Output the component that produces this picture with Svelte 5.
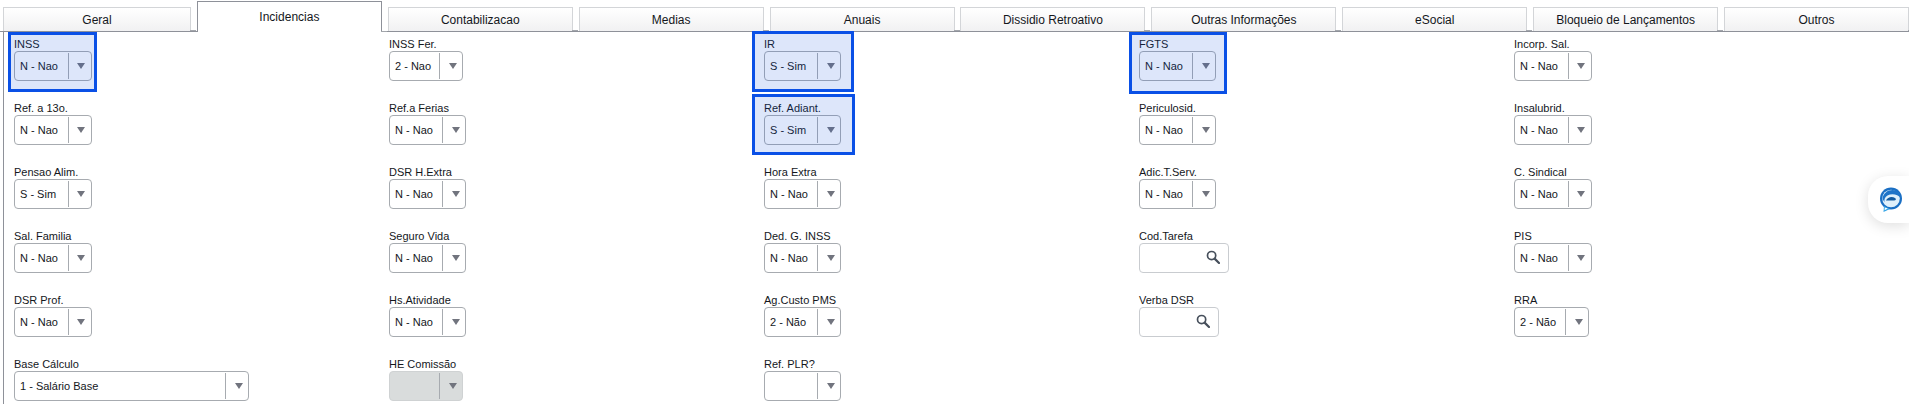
<script>
  const tabs = ['Geral','Incidencias','Contabilizacao','Medias','Anuais','Dissidio Retroativo','Outras Informações','eSocial','Bloqueio de Lançamentos','Outros'];
  const fields = [
    {l:'INSS',v:'N - Nao',w:'w78',hl:'h1'},{l:'INSS Fer.',v:'2 - Nao',w:'w74'},{l:'IR',v:'S - Sim',w:'w77',hl:'h2'},{l:'FGTS',v:'N - Nao',w:'w77',hl:'h3'},{l:'Incorp. Sal.',v:'N - Nao',w:'w78'},
    {l:'Ref. a 13o.',v:'N - Nao',w:'w78'},{l:'Ref.a Ferias',v:'N - Nao',w:'w77'},{l:'Ref. Adiant.',v:'S - Sim',w:'w77',hl:'h4'},{l:'Periculosid.',v:'N - Nao',w:'w77'},{l:'Insalubrid.',v:'N - Nao',w:'w78'},
    {l:'Pensao Alim.',v:'S - Sim',w:'w78'},{l:'DSR H.Extra',v:'N - Nao',w:'w77'},{l:'Hora Extra',v:'N - Nao',w:'w77'},{l:'Adic.T.Serv.',v:'N - Nao',w:'w77'},{l:'C. Sindical',v:'N - Nao',w:'w78'},
    {l:'Sal. Familia',v:'N - Nao',w:'w78'},{l:'Seguro Vida',v:'N - Nao',w:'w77'},{l:'Ded. G. INSS',v:'N - Nao',w:'w77'},{l:'Cod.Tarefa',t:'search',w:'w90'},{l:'PIS',v:'N - Nao',w:'w78'},
    {l:'DSR Prof.',v:'N - Nao',w:'w78'},{l:'Hs.Atividade',v:'N - Nao',w:'w77'},{l:'Ag.Custo PMS',v:'2 - Não',w:'w77'},{l:'Verba DSR',t:'search',w:'w80'},{l:'RRA',v:'2 - Não',w:'w75'},
    {l:'Base Cálculo',v:'1 - Salário Base',w:'w235'},{l:'HE Comissão',v:'',w:'w74',dis:true},{l:'Ref. PLR?',v:'',w:'w77'}
  ];
</script>

<div class="page">
  <nav class="tabs">
    {#each tabs as t, i}
      <div class="tab" class:active={i === 1} class:first={i === 0}>{t}</div>
    {/each}
  </nav>
  <main class="form">
    {#each fields as f}
      <div class="field">
        {#if f.hl}<div class="hl {f.hl}"></div>{/if}
        <div class="label">{f.l}</div>
        {#if f.t === 'search'}
          <div class="control lookup {f.w}">
            <span class="value"></span>
            <svg class="search" viewBox="0 0 14 14" width="14" height="14" aria-hidden="true">
              <circle cx="5.6" cy="5.6" r="4.1" fill="none" stroke="#47505c" stroke-width="1.7"/>
              <path d="M8.6 8.6 L13 13" stroke="#47505c" stroke-width="2.2" stroke-linecap="round"/>
            </svg>
          </div>
        {:else}
          <div class="control {f.w}" class:disabled={f.dis}>
            <span class="value">{f.v}</span>
            <span class="btn"><span class="caret"></span></span>
          </div>
        {/if}
      </div>
    {/each}
  </main>
  <aside class="chat">
    <svg viewBox="0 0 26 28" width="26" height="28" aria-hidden="true">
      <circle cx="13" cy="12.5" r="11" fill="#1a6fc4"/>
      <circle cx="13" cy="12.5" r="8.8" fill="#dff0fb"/>
      <path d="M4.5 13 C5 6 12 2.5 18 4.5 C21.5 6 23 9 23 12 C20 8.5 14 7 9.5 9.5 C7 11 6 13 6.5 16 Z" fill="#1f74c8"/>
      <path d="M8 14.5 C9.5 11 14 10 17 12 C18.5 13 18 14.5 16 14.5 Z" fill="#135a9f"/>
      <path d="M6 20 L5.5 26 L12 23 Z" fill="#35a5e6"/>
      <path d="M6.8 21.5 L6.6 24.2 L9.8 22.6 Z" fill="#fff"/>
    </svg>
  </aside>
</div>

<style>
  :global(body) { margin: 0; background: #fff; }
  .page {
    position: relative;
    width: 1909px;
    height: 404px;
    overflow: hidden;
    font-family: "Liberation Sans", Arial, sans-serif;
    font-size: 11px;
    color: #14171c;
  }
  .tabs {
    display: flex;
    align-items: flex-end;
    gap: 5.9px;
    height: 32px;
    padding-left: 3px;
    box-sizing: border-box;
    border-bottom: 1px solid #8e9199;
    font-size: 12px;
  }
  .tab {
    position: relative;
    flex: 0 0 185px;
    height: 24px;
    box-sizing: border-box;
    border: 1px solid #d3d5d8;
    border-bottom: 0;
    background: linear-gradient(#ffffff, #f1f1f2);
    display: flex;
    align-items: center;
    justify-content: center;
  }
  .tab::after {
    content: "";
    position: absolute;
    left: 100%;
    bottom: 0;
    width: 6px;
    height: 1px;
    background: #a3a6ac;
  }
  .tab.first { flex-basis: 188px; }
  .tab.active {
    height: 31px;
    background: #fff;
    border: 1px solid #8e9199;
    border-bottom: 0;
    margin-bottom: -1px;
  }
  .form {
    display: grid;
    grid-template-columns: repeat(5, 375px);
    grid-auto-rows: 64px;
    height: 372px;
    box-sizing: border-box;
    padding: 6px 0 0 10px;
    margin-left: 3px;
    border-left: 1px solid #8e9199;
    width: 1906px;
  }
  .field { position: relative; }
  .label { height: 13px; line-height: 12px; }
  .control {
    display: flex;
    align-items: stretch;
    position: relative;
    box-sizing: border-box;
    height: 30px;
    border: 1px solid #a7abb0;
    border-radius: 4px;
    background: #fff;
  }
  .lookup { border-color: #c9ccd0; }
  .w74 { width: 74px; }
  .w75 { width: 75px; }
  .w77 { width: 77px; }
  .w78 { width: 77.5px; }
  .w80 { width: 80px; }
  .w90 { width: 90px; }
  .w235 { width: 235px; }
  .disabled { background: #d9dcdc; border-color: #cfd2d3; }
  .value { flex: 1; padding-left: 5px; line-height: 28px; white-space: pre; }
  .btn {
    flex: 0 0 22px;
    margin: 1px 0;
    border-left: 1px solid #a7abb0;
    display: flex;
    align-items: center;
    justify-content: center;
  }
  .caret {
    width: 0;
    height: 0;
    border-left: 4px solid transparent;
    border-right: 4px solid transparent;
    border-top: 6px solid #71747e;
    margin-left: 3px;
  }
  .search { position: absolute; right: 8px; top: 6px; }
  .hl {
    position: absolute;
    z-index: 2;
    box-sizing: border-box;
    border: 3px solid #0a50e6;
    background: rgba(25, 90, 220, 0.15);
    pointer-events: none;
  }
  .h1 { left: -6px; top: -6px; width: 89px; height: 60px; }
  .h2 { left: -12px; top: -7px; width: 102px; height: 61px; }
  .h3 { left: -10px; top: -6px; width: 98px; height: 62px; }
  .h4 { left: -12px; top: -8px; width: 103px; height: 61px; }
  .chat {
    position: absolute;
    right: 0;
    top: 176px;
    width: 41px;
    height: 47px;
    background: #fff;
    border-radius: 20px 0 0 20px;
    box-shadow: 0 3px 14px rgba(0, 0, 0, 0.13);
    display: flex;
    align-items: center;
    padding-left: 10px;
    box-sizing: border-box;
  }
</style>
